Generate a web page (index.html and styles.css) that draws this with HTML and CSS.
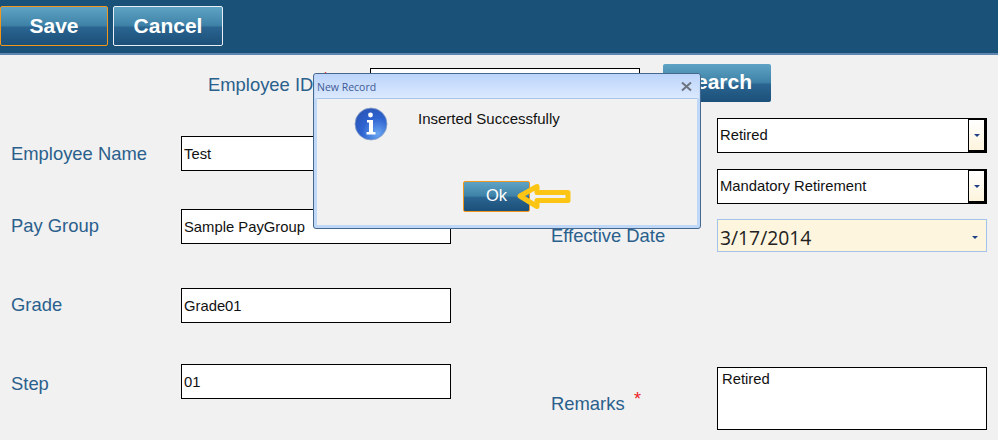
FILE: index.html
```html
<!DOCTYPE html>
<html lang="en">
<head>
<meta charset="utf-8">
<title>New Record</title>
<link rel="stylesheet" href="styles.css">
</head>
<body>
<div class="page">
  <header class="toolbar">
    <button class="btn btn-save">Save</button>
    <button class="btn btn-cancel">Cancel</button>
  </header>
  <main class="form">
    <div class="id-row">
      <label class="label id-label">Employee ID<span class="req id-req">*</span></label>
      <div class="field id-field"></div>
      <button class="btn btn-search">Search</button>
    </div>
    <div class="columns">
      <section class="col-left">
        <div class="row row-name"><label class="label left-label name-label">Employee Name</label><div class="field name-field">Test</div></div>
        <div class="row row-pay"><label class="label left-label">Pay Group</label><div class="field">Sample PayGroup</div></div>
        <div class="row row-grade"><label class="label left-label">Grade</label><div class="field">Grade01</div></div>
        <div class="row"><label class="label left-label step-label">Step</label><div class="field">01</div></div>
      </section>
      <section class="col-right">
        <div class="row row-status"><span class="right-label"></span><div class="field select">Retired<span class="drop"><i class="caret"></i></span></div></div>
        <div class="row row-reason"><span class="right-label"></span><div class="field select">Mandatory Retirement<span class="drop"><i class="caret"></i></span></div></div>
        <div class="row row-date"><label class="label right-label date-label">Effective Date</label><div class="date">3/17/2014<i class="caret"></i></div></div>
        <div class="row row-remarks"><label class="label right-label remarks-label">Remarks<span class="req remarks-req">*</span></label><div class="field area">Retired</div></div>
      </section>
    </div>
  </main>
  <div class="dialog">
    <div class="title">
      <span class="title-text">New Record</span>
      <svg class="close" width="11" height="11" viewBox="0 0 11 11"><path d="M1 1.500 10 9.500M10 1.500 1 9.500" stroke="#6d7480" stroke-width="2" fill="none"/></svg>
    </div>
    <div class="dialog-body">
      <div class="message">
        <svg class="info" width="34" height="34" viewBox="0 0 34 34">
          <defs>
            <radialGradient id="g" cx="0.7" cy="0.8" r="0.9"><stop offset="0" stop-color="#6aa6f2"/><stop offset="0.55" stop-color="#2d62cf"/><stop offset="1" stop-color="#2a55b5"/></radialGradient>
          </defs>
          <circle cx="17" cy="17" r="16" fill="url(#g)" stroke="#8ea3c4" stroke-width="0.8"/>
          <circle cx="16.500" cy="8" r="2.400" fill="#fff"/>
          <path d="M13 13h6v12h2.500v2.500h-9V25H15v-9.500h-2z" fill="#fff"/>
        </svg>
        <span class="msg-text">Inserted Successfully</span>
      </div>
      <div class="actions">
        <button class="btn btn-ok">Ok</button>
        <svg class="arrow" width="54" height="26" viewBox="0 0 54 26"><path d="M3 13 20 3.500v6h31v8H20v6z" fill="none" stroke="#fdc513" stroke-width="5" stroke-linejoin="round"/></svg>
      </div>
    </div>
  </div>
</div>
</body>
</html>
```
FILE: styles.css
```css
* { box-sizing: border-box; }
html, body { margin: 0; padding: 0; }
body { background: #f1f1f1; font-family: "Liberation Sans", Arial, sans-serif; }
.page { position: relative; width: 998px; height: 440px; overflow: hidden; background: #f1f1f1; }

.toolbar { display: flex; align-items: flex-start; gap: 5px; height: 55px; padding-top: 6px; background: #1a5178; border-bottom: 2px solid #5f86ae; }

.btn { font-family: "Liberation Sans", Arial, sans-serif; font-weight: bold; color: #fff; padding: 0; border-radius: 2px; background: linear-gradient(#5ea3c4 0%, #3f82a8 48%, #2a6490 54%, #1b5079 100%); }
.btn-save { width: 108px; height: 40px; font-size: 21px; border: 1px solid #f3971a; }
.btn-cancel { width: 110px; height: 40px; font-size: 21px; border: 1px solid #e8eef4; }
.btn-search { width: 108px; height: 38px; font-size: 21px; border: 0; margin-left: 23px; padding-bottom: 2px; }
.btn-ok { width: 67px; height: 31px; font-size: 16.500px; font-weight: normal; border: 1px solid #f3971a; padding-bottom: 2px; }

.form { display: block; }
.id-row { display: flex; align-items: flex-start; height: 38px; margin-top: 9px; padding-left: 208px; }
.id-label { width: 162px; margin-top: 10px; position: relative; }
.id-field { margin-top: 4px; }

.label { font-size: 18.400px; line-height: 22px; color: #2a608c; }
.req { position: absolute; color: #ee1c25; font-size: 18px; }
.id-req { left: 114px; top: -6px; }
.remarks-req { left: 83px; top: -5px; }

.columns { display: flex; }
.col-left { width: 540px; padding: 34px 0 0 11px; }
.col-right { padding: 16px 0 0 11px; }

.row { display: flex; align-items: flex-start; }
.row-name { margin-bottom: 38px; }
.row-pay { margin-bottom: 44px; }
.row-grade { margin-bottom: 41px; }
.row-status { margin-bottom: 16px; }
.row-reason { margin-bottom: 15px; }
.row-date { margin-bottom: 115px; }

.left-label { width: 170px; margin-top: 6px; }
.name-label { margin-top: 7px; }
.step-label { margin-top: 9px; }
.name-field { line-height: 38px; }
.right-label { display: block; width: 166px; position: relative; }
.date-label { margin-top: 6px; }
.remarks-label { margin-top: 26px; }

.field { position: relative; width: 270px; height: 35px; padding: 0 2px; border: 1px solid #000; background: #fff; color: #111; font-size: 14.800px; line-height: 35px; white-space: nowrap; }
.select { line-height: 33px; }
.drop { position: absolute; top: 0; right: 0; width: 18px; height: 33px; border: 1px solid #000; border-width: 1px 2px 2px 1px; background: linear-gradient(#fff, #fdf4dc); display: flex; align-items: center; justify-content: center; }
.caret { display: block; width: 0; height: 0; border-left: 3px solid transparent; border-right: 3px solid transparent; border-top: 3px solid #1d3f86; }

.date { display: flex; align-items: center; justify-content: space-between; width: 270px; height: 33px; padding: 4px 8px 0 2px; border: 1px solid #a3c3ea; background: #fdf5dd; color: #222; font-family: "Open Sans", sans-serif; font-size: 19.300px; }
.area { height: 63px; padding: 3px 4px; line-height: 17px; }

.dialog { position: absolute; left: 313px; top: 73px; width: 388px; height: 156px; display: flex; flex-direction: column; border: 1px solid #46688f; border-radius: 3px; background: #c0d8f8; padding: 0 3px 3px; }
.title { display: flex; align-items: center; justify-content: space-between; height: 24px; padding: 1px 7px 0 0; margin: 0 -2px; background: linear-gradient(#bcd4fa, #dbe9fe); }
.title-text { padding-left: 2px; font-family: "Open Sans", sans-serif; font-size: 10.500px; color: #3d5a96; }
.dialog-body { flex: 1; display: flex; flex-direction: column; background: #f1f1f1; border-top: 1px solid #a9c5ea; }
.message { display: flex; align-items: flex-start; height: 82px; padding: 8px 0 0 37px; }
.info { flex: none; }
.msg-text { margin: 3px 0 0 30px; font-size: 15px; line-height: 17px; color: #111; }
.actions { display: flex; align-items: flex-start; padding-left: 146px; }
.arrow { margin: 2px 0 0 -13px; position: relative; }
```
